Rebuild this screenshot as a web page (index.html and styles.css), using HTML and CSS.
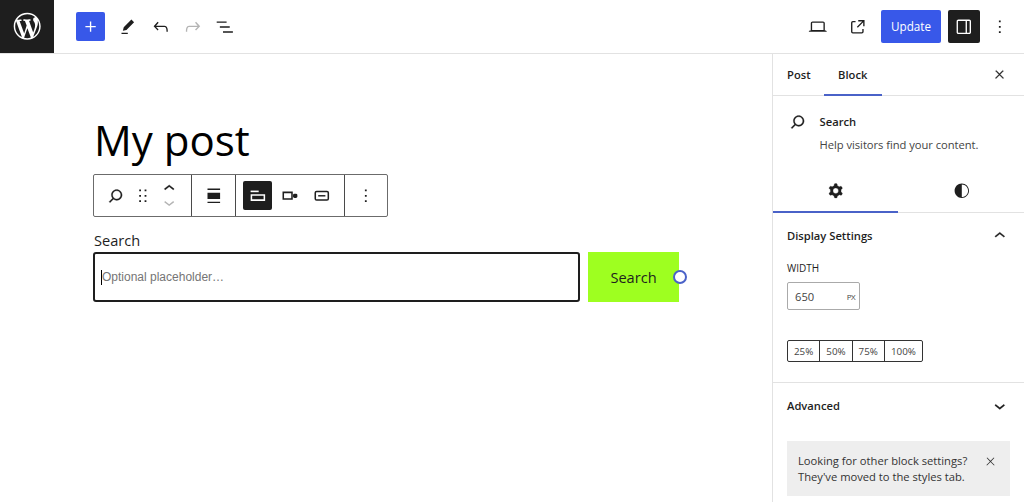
FILE: index.html
```
<!DOCTYPE html>
<html lang="en">
<head>
    <meta charset="UTF-8">
    <meta name="viewport" content="width=device-width, initial-scale=1.0">
    <title>Edit Post</title>
    <link rel="stylesheet" href="styles.css">
</head>
<body>

<header class="editor-header">
    <a class="site-logo" aria-label="View Posts">
        <svg viewBox="-2 -2 24 24"><path d="M20 10c0-5.51-4.49-10-10-10C4.48 0 0 4.49 0 10c0 5.52 4.48 10 10 10 5.51 0 10-4.48 10-10zM7.78 15.37L4.37 6.22c.55-.02 1.17-.08 1.17-.08.5-.06.44-1.13-.06-1.11 0 0-1.45.11-2.37.11-.18 0-.37 0-.58-.01C4.12 2.69 6.87 1.11 10 1.11c2.33 0 4.45.87 6.05 2.34-.68-.11-1.65.39-1.65 1.58 0 .74.45 1.36.9 2.1.35.61.55 1.36.55 2.46 0 1.49-1.4 5-1.4 5l-3.03-8.37c.54-.02.82-.17.82-.17.5-.05.44-1.25-.06-1.22 0 0-1.44.12-2.38.12-.87 0-2.33-.12-2.33-.12-.5-.03-.56 1.2-.06 1.22l.92.08 1.26 3.41zM17.41 10c.24-.64.74-1.87.43-4.25.7 1.29 1.05 2.71 1.05 4.25 0 3.29-1.73 6.24-4.4 7.78.97-2.59 1.94-5.2 2.92-7.78zM6.1 18.09C3.12 16.65 1.11 13.53 1.11 10c0-1.3.23-2.48.72-3.59C3.25 10.3 4.67 14.2 6.1 18.09zm4.03-6.63l2.58 6.98c-.86.29-1.76.45-2.71.45-.79 0-1.57-.11-2.29-.33.81-2.38 1.62-4.74 2.42-7.1z"/></svg>
    </a>
    <div class="header-tools">
        <button class="inserter" aria-label="Add block">
            <svg class="icon" viewBox="0 0 24 24"><path d="M11 12.5V17.5H12.5V12.5H17.5V11H12.5V6H11V11H6V12.5H11Z"/></svg>
        </button>
        <svg class="icon" viewBox="0 0 24 24"><path d="m19 7-3-3-8.5 8.5-1 4 4-1L19 7Zm-7 11.5H5V20h7v-1.5Z"/></svg>
        <svg class="icon" viewBox="0 0 24 24"><path d="M18.3 11.7c-.6-.6-1.4-.9-2.3-.9H6.7l2.9-3.3-1.1-1-4.5 5L8.5 16l1-1-2.7-2.7H16c.5 0 .9.2 1.3.5 1 1 1 3.4 1 4.5v.3h1.5v-.2c0-1.5 0-4.3-1.5-5.7z"/></svg>
        <svg class="icon disabled" viewBox="0 0 24 24"><path d="M15.6 6.5l-1.1 1 2.9 3.3H8c-.9 0-1.7.3-2.3.9-1.4 1.5-1.4 4.2-1.4 5.6v.2h1.5v-.3c0-1.1 0-3.5 1-4.5.3-.3.7-.5 1.3-.5h9.2L14.5 15l1.1 1.1 4.6-4.6-4.6-5z"/></svg>
        <svg class="icon" viewBox="0 0 24 24"><path d="M3 6h11v1.5H3V6Zm3.5 5.5h11V13h-11v-1.5ZM21 17H10v1.5h11V17Z"/></svg>
    </div>
    <div class="header-settings">
        <svg class="icon preview" viewBox="0 0 24 24"><path d="M20.5 16h-.7V8c0-1.1-.9-2-2-2H6.2c-1.1 0-2 .9-2 2v8h-.7c-.8 0-1.5.7-1.5 1.5h20c0-.8-.7-1.5-1.5-1.5zM5.7 8c0-.3.2-.5.5-.5h11.6c.3 0 .5.2.5.5v7.6H5.7V8z"/></svg>
        <svg class="icon view" viewBox="0 0 24 24"><path d="M19.5 4.5h-7V6h4.44l-5.97 5.97 1.06 1.06L18 7.06v4.44h1.5v-7Zm-13 1a2 2 0 0 0-2 2v10a2 2 0 0 0 2 2h10a2 2 0 0 0 2-2v-3H17v3a.5.5 0 0 1-.5.5h-10a.5.5 0 0 1-.5-.5v-10a.5.5 0 0 1 .5-.5h3V5.5h-3Z"/></svg>
        <button class="update">Update</button>
        <button class="toggle-sidebar" aria-label="Settings">
            <svg class="icon" viewBox="0 0 24 24"><path d="M18 4H6c-1.1 0-2 .9-2 2v12c0 1.1.9 2 2 2h12c1.1 0 2-.9 2-2V6c0-1.1-.9-2-2-2zm-4 14.5H6c-.3 0-.5-.2-.5-.5V6c0-.3.2-.5.5-.5h8v13zm4.5-.5c0 .3-.2.5-.5.5h-2.5v-13H18c.3 0 .5.2.5.5v12z"/></svg>
        </button>
        <svg class="icon" viewBox="0 0 24 24"><path d="M13 19h-2v-2h2v2zm0-6h-2v-2h2v2zm0-6h-2V5h2v2z"/></svg>
    </div>
</header>

<div class="editor-body">
    <main class="canvas">
        <h1 class="post-title">My post</h1>

        <div class="block-toolbar">
            <div class="toolbar-group group-block">
                <svg class="icon bold" viewBox="0 0 24 24"><path d="M13 5c-3.3 0-6 2.7-6 6 0 1.4.5 2.7 1.3 3.7l-3.8 3.8 1.1 1.1 3.8-3.8c1 .8 2.3 1.3 3.7 1.3 3.3 0 6-2.7 6-6S16.3 5 13 5zm0 10.5c-2.5 0-4.5-2-4.5-4.5s2-4.5 4.5-4.5 4.5 2 4.5 4.5-2 4.5-4.5 4.5z"/></svg>
                <svg class="icon drag" viewBox="0 0 24 24"><path d="M8 7h2V5H8v2zm0 6h2v-2H8v2zm0 6h2v-2H8v2zm6-14v2h2V5h-2zm0 8h2v-2h-2v2zm0 6h2v-2h-2v2z"/></svg>
                <div class="movers">
                    <svg viewBox="4 7 16 10"><path d="M6.5 12.4L12 8l5.5 4.4-.9 1.2L12 10l-4.5 3.6-1-1.2z"/></svg>
                    <svg class="disabled" viewBox="4 7 16 10"><path d="M17.5 11.6L12 16l-5.5-4.4.9-1.2L12 14l4.5-3.6 1 1.2z"/></svg>
                </div>
            </div>
            <div class="toolbar-group group-align">
                <svg class="icon" viewBox="0 0 24 24"><path d="M5 4h14v1.5H5zM5 8.5h14v7H5zM5 18.5h14V20H5z"/></svg>
            </div>
            <div class="toolbar-group group-search">
                <button class="pressed" aria-label="Toggle search label">
                    <svg class="icon" viewBox="0 0 24 24"><path d="M4 6.2h9V8H4z"/><path class="stroke" d="M4.9 11.2h14.4v5.6H4.9z"/></svg>
                </button>
                <svg class="icon" viewBox="0 0 24 24"><path class="stroke" d="M4.75 8.2h9.7v7.4H4.75z"/><rect x="15.6" y="9.6" width="4.8" height="4.8" rx="1.6"/></svg>
                <svg class="icon" viewBox="0 0 24 24"><rect class="stroke" x="4.75" y="7.25" width="14.5" height="9.5" rx="1.5"/><path d="M8 11.2h8v1.6H8z"/></svg>
            </div>
            <div class="toolbar-group group-more">
                <svg class="icon" viewBox="0 0 24 24"><path d="M13 19h-2v-2h2v2zm0-6h-2v-2h2v2zm0-6h-2V5h2v2z"/></svg>
            </div>
        </div>

        <div class="search-block">
            <div class="search-label">Search</div>
            <div class="search-row">
                <div class="search-input"><span class="caret"></span>Optional placeholder…</div>
                <div class="search-button">Search<span class="resize-handle"></span></div>
            </div>
        </div>
    </main>

    <aside class="sidebar">
        <div class="sidebar-tabs">
            <button class="tab">Post</button>
            <button class="tab active">Block</button>
            <svg class="icon close" viewBox="0 0 24 24"><path d="M13 11.8l6.1-6.3-1-1-6.1 6.2-6.1-6.2-1 1 6.1 6.3-6.5 6.7 1 1 6.5-6.6 6.5 6.6 1-1z"/></svg>
        </div>

        <div class="block-card">
            <svg class="icon bold" viewBox="0 0 24 24"><path d="M13 5c-3.3 0-6 2.7-6 6 0 1.4.5 2.7 1.3 3.7l-3.8 3.8 1.1 1.1 3.8-3.8c1 .8 2.3 1.3 3.7 1.3 3.3 0 6-2.7 6-6S16.3 5 13 5zm0 10.5c-2.5 0-4.5-2-4.5-4.5s2-4.5 4.5-4.5 4.5 2 4.5 4.5-2 4.5-4.5 4.5z"/></svg>
            <div>
                <h2>Search</h2>
                <p>Help visitors find your content.</p>
            </div>
        </div>

        <div class="inspector-tabs">
            <div class="inspector-tab active">
                <svg class="icon bold" viewBox="0 0 24 24"><path fill-rule="evenodd" d="M10.289 4.836A1 1 0 0111.275 4h1.306a1 1 0 01.987.836l.244 1.466c.787.26 1.503.679 2.108 1.218l1.393-.522a1 1 0 011.216.437l.653 1.13a1 1 0 01-.23 1.273l-1.148.944a6.025 6.025 0 010 2.435l1.149.946a1 1 0 01.23 1.272l-.653 1.13a1 1 0 01-1.216.437l-1.394-.522c-.605.54-1.32.958-2.108 1.218l-.244 1.466a1 1 0 01-.987.836h-1.306a1 1 0 01-.986-.836l-.244-1.466a5.995 5.995 0 01-2.108-1.218l-1.394.522a1 1 0 01-1.217-.436l-.653-1.131a1 1 0 01.23-1.272l1.149-.946a6.026 6.026 0 010-2.435l-1.148-.944a1 1 0 01-.23-1.272l.653-1.131a1 1 0 011.217-.437l1.393.522a5.994 5.994 0 012.108-1.218l.244-1.466zM14.929 12a3 3 0 11-6 0 3 3 0 016 0z"/></svg>
            </div>
            <div class="inspector-tab">
                <svg class="icon" viewBox="0 0 24 24"><path d="M12 4c-4.4 0-8 3.6-8 8s3.6 8 8 8 8-3.6 8-8-3.6-8-8-8zm0 15V5c3.9 0 7 3.1 7 7s-3.1 7-7 7z"/></svg>
            </div>
        </div>

        <section class="panel display-settings">
            <div class="panel-title">
                <h2>Display Settings</h2>
                <svg class="icon" viewBox="0 0 24 24"><path d="M6.5 12.4L12 8l5.5 4.4-.9 1.2L12 10l-4.5 3.6-1-1.2z"/></svg>
            </div>
            <div class="control-label">WIDTH</div>
            <div class="unit-control"><span>650</span><span class="unit">PX</span></div>
            <div class="button-group">
                <button>25%</button>
                <button>50%</button>
                <button>75%</button>
                <button>100%</button>
            </div>
        </section>

        <section class="panel advanced">
            <div class="panel-title">
                <h2>Advanced</h2>
                <svg class="icon" viewBox="0 0 24 24"><path d="M17.5 11.6L12 16l-5.5-4.4.9-1.2L12 14l4.5-3.6 1 1.2z"/></svg>
            </div>
        </section>

        <div class="notice">
            <p>Looking for other block settings?<br>They've moved to the styles tab.</p>
            <svg class="icon" viewBox="0 0 24 24"><path d="M13 11.8l6.1-6.3-1-1-6.1 6.2-6.1-6.2-1 1 6.1 6.3-6.5 6.7 1 1 6.5-6.6 6.5 6.6 1-1z"/></svg>
        </div>
    </aside>
</div>

</body>
</html>
```
FILE: styles.css
```
:root {
    --accent: #3858e9;
    --accent-line: #4a62c8;
    --dark: #1e1e1e;
    --border: #e2e2e2;
    --font: "Segoe UI", "Open Sans", "Noto Sans", sans-serif;
}

* {
    box-sizing: border-box;
}

body {
    margin: 0;
    width: 1024px;
    height: 502px;
    overflow: hidden;
    display: flex;
    flex-direction: column;
    background: #fff;
    color: var(--dark);
    font-family: var(--font);
    font-size: 11.2px;
}

h1, h2, p {
    margin: 0;
    font-weight: 400;
}

button {
    border: 0;
    padding: 0;
    background: none;
    color: inherit;
    font: inherit;
    display: flex;
    align-items: center;
    justify-content: center;
}

svg {
    display: block;
    flex: none;
    fill: currentColor;
}

.icon {
    width: 21.6px;
    height: 21.6px;
}

.bold {
    stroke: currentColor;
    stroke-width: 0.25;
}

.stroke {
    fill: none;
    stroke: currentColor;
    stroke-width: 1.7;
}

.disabled {
    color: #b4b4b4;
}

/* Header */
.editor-header {
    height: 54px;
    flex: none;
    display: flex;
    align-items: center;
    border-bottom: 1px solid var(--border);
}

.site-logo {
    width: 54px;
    height: 53px;
    background: var(--dark);
    color: #fff;
    display: flex;
    align-items: center;
    justify-content: center;
}

.site-logo svg {
    width: 32.4px;
    height: 32.4px;
}

.header-tools {
    display: flex;
    align-items: center;
    gap: 10.8px;
    margin-left: 22px;
}

.inserter {
    width: 29px;
    height: 29px;
    margin-right: 1.5px;
    border-radius: 2px;
    background: var(--accent);
    color: #fff;
}

.header-settings {
    display: flex;
    align-items: center;
    margin-left: auto;
    padding-right: 13.4px;
}

.preview {
    margin-right: 18.4px;
}

.view {
    margin-right: 12.4px;
}

.update {
    width: 60px;
    height: 33px;
    margin-right: 7px;
    padding-bottom: 1px;
    border-radius: 2px;
    background: var(--accent);
    color: #fff;
    font-size: 11.7px;
}

.toggle-sidebar {
    width: 32px;
    height: 33px;
    margin-right: 9px;
    border-radius: 2px;
    background: var(--dark);
    color: #fff;
}

/* Canvas */
.editor-body {
    flex: 1;
    display: flex;
    min-height: 0;
}

.canvas {
    flex: 1;
    padding: 56px 0 0 93px;
}

.post-title {
    height: 64px;
    padding-left: 1px;
    line-height: 60px;
    font-size: 42px;
    color: #000;
}

.block-toolbar {
    display: flex;
    width: 295px;
    height: 43px;
    border: 1px solid #6b6b6b;
    border-radius: 2px;
}

.toolbar-group {
    display: flex;
    align-items: center;
    border-right: 1px solid #4a4a4a;
}

.toolbar-group:last-child {
    border-right: 0;
}

.group-block {
    width: 98px;
    padding-left: 11px;
}

.drag {
    margin-left: 5px;
}

.movers {
    display: flex;
    flex-direction: column;
    gap: 5px;
    margin-left: 9.2px;
}

.movers svg {
    width: 14.4px;
    height: 9px;
}

.movers svg:first-child {
    stroke: currentColor;
    stroke-width: 0.3;
}

.group-align {
    width: 44px;
    justify-content: center;
}

.group-search {
    width: 109px;
    gap: 10.8px;
    padding-left: 7px;
}

.pressed {
    width: 29px;
    height: 29px;
    margin-right: -4px;
    border-radius: 2px;
    background: var(--dark);
    color: #fff;
}

.group-more {
    flex: 1;
    justify-content: center;
}

.search-label {
    margin-top: 12px;
    height: 23px;
    padding-left: 1px;
    line-height: 22px;
    font-size: 14.6px;
}

.search-row {
    display: flex;
    gap: 8px;
}

.search-input {
    width: 487px;
    height: 50px;
    display: flex;
    align-items: center;
    padding-left: 6px;
    border: 2px solid var(--dark);
    border-radius: 3px;
    color: #757575;
    font-family: "Liberation Sans", Arial, sans-serif;
    font-size: 12px;
}

.caret {
    width: 1px;
    height: 15px;
    background: #000;
}

.search-button {
    position: relative;
    width: 91px;
    height: 50px;
    display: flex;
    align-items: center;
    justify-content: center;
    background: #9eff20;
    font-size: 14.6px;
}

.resize-handle {
    position: absolute;
    right: -7.5px;
    top: 17.5px;
    width: 14px;
    height: 14px;
    border: 2px solid var(--accent-line);
    border-radius: 50%;
    background: #fff;
}

/* Sidebar */
.sidebar {
    width: 252px;
    border-left: 1px solid var(--border);
}

.sidebar h2 {
    font-size: 11.2px;
    font-weight: 600;
}

.sidebar-tabs {
    height: 42px;
    display: flex;
    align-items: stretch;
    border-bottom: 1px solid var(--border);
}

.tab {
    padding: 0 13px 0 14px;
    font-weight: 600;
}

.tab.active {
    height: 42px;
    padding: 0 14.5px;
    border-bottom: 2px solid var(--accent-line);
}

.close {
    width: 13px;
    height: 13px;
    margin: 14px 18px 0 auto;
    stroke: currentColor;
    stroke-width: 0.9;
}

.block-card {
    display: flex;
    gap: 11px;
    height: 74px;
    padding: 15px 14px 0;
}

.block-card h2 {
    line-height: 22px;
}

.block-card p {
    line-height: 23px;
    color: #444;
    letter-spacing: -0.04px;
}

.inspector-tabs {
    height: 43px;
    display: flex;
    border-bottom: 1px solid var(--border);
}

.inspector-tab {
    flex: 1;
    height: 43px;
    display: flex;
    align-items: center;
    justify-content: center;
    border-bottom: 2px solid transparent;
}

.inspector-tab:last-child {
    padding-left: 1px;
}

.inspector-tab.active {
    border-bottom-color: var(--accent-line);
}

.panel {
    padding: 0 14px;
    border-bottom: 1px solid var(--border);
}

.panel-title {
    height: 46px;
    display: flex;
    align-items: center;
    justify-content: space-between;
}

.panel-title h2 {
    margin-bottom: 2px;
}

.panel-title .icon {
    margin-right: -1px;
    margin-bottom: 1px;
    stroke: currentColor;
    stroke-width: 0.3;
}

.display-settings {
    height: 170px;
}

.control-label {
    height: 23px;
    line-height: 19px;
    font-size: 10px;
}

.unit-control {
    width: 73px;
    height: 28px;
    display: flex;
    align-items: center;
    justify-content: space-between;
    padding: 0 4px 0 7px;
    border: 1px solid #aaa;
    border-radius: 2px;
    color: #444;
}

.unit {
    font-size: 8px;
    letter-spacing: -0.6px;
}

.button-group {
    display: flex;
    width: 136px;
    margin-top: 30px;
    border: 1px solid #333;
    border-radius: 2px;
}

.button-group button {
    width: 32.3px;
    height: 20px;
    color: #444;
    font-size: 9.8px;
    border-right: 1px solid #333;
}

.button-group button:last-child {
    flex: 1;
    border-right: 0;
}

.advanced {
    border-bottom: 0;
}

.notice {
    display: flex;
    justify-content: space-between;
    width: 223px;
    height: 55px;
    margin: 12px 0 0 14px;
    padding: 12px 13px 0 11px;
    background: #eee;
    color: #333;
    line-height: 16px;
}

.notice .icon {
    width: 13px;
    height: 13px;
    margin-top: 2px;
}
```
